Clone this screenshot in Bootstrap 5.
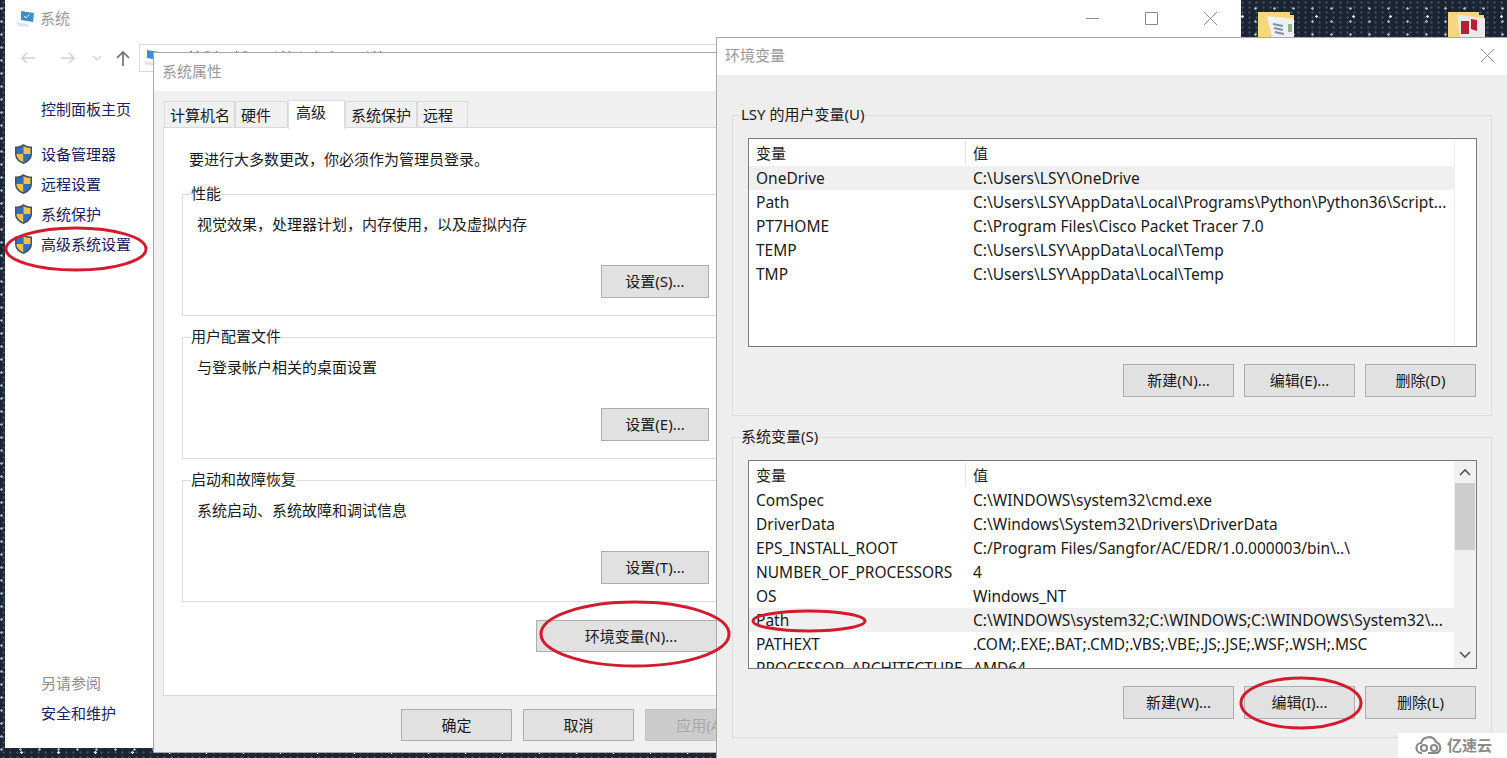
<!DOCTYPE html>
<html lang="zh-CN">
<head>
    <meta charset="UTF-8">
    <meta name="viewport" content="width=device-width, initial-scale=1.0">
    <title>环境变量</title>
    <link href="https://cdn.jsdelivr.net/npm/bootstrap@5.3.0/dist/css/bootstrap.min.css" rel="stylesheet">
    <style>
        body {
            width: 1507px;
            height: 758px;
            overflow: hidden;
            position: relative;
            font-family: "Noto Sans", "Noto Sans CJK SC", sans-serif;
            font-size: 15px;
            color: #1a1a1a;
            background-color: #1b2433;
            background-image:
                radial-gradient(circle, #dfe8f2 0 1px, transparent 1.5px),
                radial-gradient(circle, #9fb0c4 0 1px, transparent 1.5px),
                radial-gradient(circle, #3a4656 0 1px, transparent 1.5px);
            background-size: 37px 23px, 19px 13px, 7px 5px;
            background-position: 3px 5px, 11px 2px, 0 0;
        }
        .desk-win { position: absolute; }
        .panel-win { left: 5px; top: 0; width: 1236px; height: 748px; background: #fff; }
        .props-win { left: 153px; top: 52px; width: 620px; height: 701px; background: #f0f0f0; border: 1px solid #a8a8a8; }
        .env-win { left: 716px; top: 37px; width: 791px; height: 721px; background: #eee; border-top: 1px solid #a8a8a8; border-left: 1px solid #a8a8a8; }
        .panel-title { height: 37px; padding-left: 10px; color: #999; }
        .panel-title span { margin-left: 5px; }
        .win-ctrls { gap: 46px; padding-right: 24px; }
        .panel-nav { height: 28px; margin-top: 7px; padding-left: 15px; }
        .nav-up { margin-left: 13px; }
        .addr-box { margin-left: 8px; height: 28px; width: 1080px; border: 1px solid #d9d9d9; padding-left: 3px; gap: 27px; color: #333; }
        .side-col { width: 147px; flex: 1; padding-bottom: 20px; }
        .side-link { height: 30px; line-height: 30px; padding-left: 36px; color: #1b2060; white-space: nowrap; position: relative; }
        .side-link svg { position: absolute; left: 9px; top: 4px; }
        .side-home { margin-top: 22px; margin-bottom: 15px; }
        .side-muted { color: #8c8c8c; }
        .dlg-title { background: #fff; color: #999; white-space: nowrap; }
        .props-win .dlg-title { height: 38px; line-height: 36px; padding-left: 8px; }
        .env-win .dlg-title { height: 37px; padding-bottom: 2px; padding-left: 8px; padding-right: 13px; }
        .prop-tabs { padding: 10px 0 0 10px; height: 36px; border: 0; flex-wrap: nowrap; }
        .prop-tabs .nav-link {
            height: 26px;
            padding: 0 0 0 5px;
            margin: 0;
            line-height: 27px;
            text-align: left;
            color: #1a1a1a;
            background: #f0f0f0;
            border: 1px solid #d9d9d9;
            border-bottom: 0;
            border-radius: 0;
        }
        .prop-tabs .nav-link.active {
            height: 29px;
            margin-top: -1px;
            padding-left: 7px;
            line-height: 22px;
            background: #fff;
            color: #1a1a1a;
            position: relative;
            z-index: 1;
        }
        .tab-w1 { width: 71px; }
        .tab-w2 { width: 53px; }
        .tab-w3 { width: 57px; }
        .tab-w4 { width: 72px; }
        .tab-w5 { width: 51px; }
        .tab-page { margin: 0 9px 0 9px; height: 569px; background: #fff; border: 1px solid #d9d9d9; padding-top: 19px; }
        .tab-note { height: 24px; line-height: 24px; padding-left: 25px; margin-bottom: 13px; }
        .frame { border: 1px solid #dcdcdc; margin: 0; min-width: 0; }
        .frame legend {
            float: none;
            width: auto;
            font-size: 15px;
            line-height: 19px;
            margin: 0 0 0 -6px;
            padding: 0 0 1px 0;
        }
        .tab-frame { margin: 0 34px 11px 18px; padding: 8px 18px 17px 14px; }
        .tab-frame p { height: 24px; line-height: 24px; margin: 0 0 29px 0; }
        .btn-win {
            height: 33px;
            padding: 0;
            font-size: 15px;
            color: #1a1a1a;
            background: #e1e1e1;
            border: 1px solid #adadad;
            border-radius: 0;
        }
        .btn-win:disabled { color: #a8a8a8; background: #ccc; border-color: #bfbfbf; opacity: 1; }
        .btn-set { width: 108px; }
        .btn-env { width: 190px; height: 32px; margin: 7px 0 0 372px; }
        .props-foot { padding: 13px 0 0 247px; gap: 11px; }
        .props-foot .btn-win { width: 111px; height: 32px; flex: none; }
        .env-body { padding: 30px 15px 0 15px; }
        .env-frame { padding: 13px 15px 0 15px; margin-bottom: 11px; height: 311px; }
        .env-frame legend { margin-left: -7px; }
        .var-list { height: 209px; width: 729px; background: #fff; border: 1px solid #7a7a7a; overflow: hidden; }
        .var-rows { width: 705px; }
        .var-side { width: 22px; border-left: 1px solid #eee; }
        .var-row { height: 24px; line-height: 24px; white-space: nowrap; font-size: 15.5px; }
        .var-head { height: 27px; line-height: 28px; font-size: 15px; }
        .var-head .var-name { border-right: 1px solid #e5e5e5; height: 24px; line-height: 25px; margin-top: 2px; }
        .var-name { width: 217px; flex: none; padding-left: 7px; overflow: hidden; }
        .var-val { overflow: hidden; padding-left: 7px; }
        .var-sel { background: #f0f0f0; }
        .scroll-rail { width: 22px; height: 100%; background: #f0f0f0; }
        .scroll-arrow { height: 22px; }
        .scroll-gap { margin-top: 94px; }
        .scroll-thumb { height: 67px; margin: 0 1px; background: #cdcdcd; }
        .env-btns { margin-top: 17px; gap: 10px; }
        .env-btns .btn-win { width: 111px; height: 33px; flex: none; }
        .scribbles { position: absolute; left: 0; top: 0; pointer-events: none; }
        .wm-box { position: absolute; right: 0; bottom: 0; width: 109px; height: 25px; background: #fff; padding-left: 16px; gap: 3px; color: #8a8a8a; font-size: 15px; font-weight: 700; }
    </style>
</head>
<body>
    <!-- desktop icons -->
    <svg class="desk-win" style="left:1258px;top:12px" width="38" height="25" viewBox="0 0 38 25">
        <path d="M0 0h32v3h4v22H0z" fill="#f6d77f"/>
        <path d="M9 4l27 3v18H14z" fill="#eef0f2"/>
        <path d="M15 12l10 2M16 16l9 2M17 20l9 2" stroke="#7f8fa8" stroke-width="2"/>
        <path d="M30 12h4v8h-4z" fill="#8cb59a"/>
    </svg>
    <svg class="desk-win" style="left:1448px;top:12px" width="38" height="25" viewBox="0 0 38 25">
        <path d="M0 0h31v3h5v22H0z" fill="#f6d77f"/>
        <path d="M9 3l28 3v19H12z" fill="#e9e9ec"/>
        <path d="M13 9h8v13h-8zM23 7l6 1v11l-6-2z" fill="#b81f33"/>
    </svg>

    <!-- control panel window -->
    <div class="desk-win panel-win d-flex flex-column">
        <div class="panel-title d-flex align-items-center justify-content-between">
            <div class="d-flex align-items-center">
                <svg width="20" height="18" viewBox="0 0 20 18"><path d="M6 1l13 2-1 9-12-2z" fill="#3d8ed0"/><path d="M9 6l2 2 4-4" stroke="#fff" fill="none"/><path d="M1 12l11 2 3 3-12-1z" fill="#dfe3e6"/></svg>
                <span>系统</span>
            </div>
            <div class="d-flex align-items-center win-ctrls">
                <svg width="13" height="13" viewBox="0 0 13 13"><path d="M0 6.500h13" stroke="#8a8a8a"/></svg>
                <svg width="13" height="13" viewBox="0 0 13 13"><path d="M.5.5h12v12H.5z" stroke="#8a8a8a" fill="none"/></svg>
                <svg width="13" height="13" viewBox="0 0 13 13"><path d="M0 0l13 13M13 0L0 13" stroke="#8a8a8a"/></svg>
            </div>
        </div>
        <div class="panel-nav d-flex align-items-center">
            <svg width="16" height="14" viewBox="0 0 16 14"><path d="M15 7H2M7 2L2 7l5 5" stroke="#d0d0d0" stroke-width="1.5" fill="none"/></svg>
            <svg class="ms-4" width="16" height="14" viewBox="0 0 16 14"><path d="M1 7h13M9 2l5 5-5 5" stroke="#d0d0d0" stroke-width="1.5" fill="none"/></svg>
            <svg class="ms-3" width="10" height="8" viewBox="0 0 10 8"><path d="M1 2l4 4 4-4" stroke="#d0d0d0" stroke-width="1.2" fill="none"/></svg>
            <svg class="nav-up" width="16" height="16" viewBox="0 0 16 16"><path d="M8 16V2M2 8l6-6 6 6" stroke="#707070" stroke-width="1.7" fill="none"/></svg>
            <div class="addr-box d-flex align-items-center">
                <svg width="18" height="18" viewBox="0 0 18 18"><path d="M4 1l12 2-1 8-11-2z" fill="#3d8ed0"/><path d="M1 12l10 2 3 3-11-1z" fill="#dfe3e6"/></svg>
                <span>控制面板 &gt; 系统和安全 &gt; 系统</span>
            </div>
        </div>
        <div class="side-col d-flex flex-column">
            <div class="side-link side-home">控制面板主页</div>
            <div class="side-link"><svg width="19" height="22" viewBox="0 0 19 22"><use href="#uac"/></svg>设备管理器</div>
            <div class="side-link"><svg width="19" height="22" viewBox="0 0 19 22"><use href="#uac"/></svg>远程设置</div>
            <div class="side-link"><svg width="19" height="22" viewBox="0 0 19 22"><use href="#uac"/></svg>系统保护</div>
            <div class="side-link"><svg width="19" height="22" viewBox="0 0 19 22"><use href="#uac"/></svg>高级系统设置</div>
            <div class="side-link side-muted mt-auto">另请参阅</div>
            <div class="side-link">安全和维护</div>
        </div>
    </div>

    <!-- system properties dialog -->
    <div class="desk-win props-win">
        <div class="dlg-title">系统属性</div>
        <ul class="nav nav-tabs prop-tabs">
            <li class="nav-item"><a class="nav-link tab-w1" href="#">计算机名</a></li>
            <li class="nav-item"><a class="nav-link tab-w2" href="#">硬件</a></li>
            <li class="nav-item"><a class="nav-link active tab-w3" href="#">高级</a></li>
            <li class="nav-item"><a class="nav-link tab-w4" href="#">系统保护</a></li>
            <li class="nav-item"><a class="nav-link tab-w5" href="#">远程</a></li>
        </ul>
        <div class="tab-page">
            <div class="tab-note">要进行大多数更改，你必须作为管理员登录。</div>
            <fieldset class="frame tab-frame">
                <legend>性能</legend>
                <p>视觉效果，处理器计划，内存使用，以及虚拟内存</p>
                <div class="d-flex justify-content-end"><button class="btn btn-win btn-set">设置(S)...</button></div>
            </fieldset>
            <fieldset class="frame tab-frame">
                <legend>用户配置文件</legend>
                <p>与登录帐户相关的桌面设置</p>
                <div class="d-flex justify-content-end"><button class="btn btn-win btn-set">设置(E)...</button></div>
            </fieldset>
            <fieldset class="frame tab-frame">
                <legend>启动和故障恢复</legend>
                <p>系统启动、系统故障和调试信息</p>
                <div class="d-flex justify-content-end"><button class="btn btn-win btn-set">设置(T)...</button></div>
            </fieldset>
            <button class="btn btn-win btn-env">环境变量(N)...</button>
        </div>
        <div class="props-foot d-flex">
            <button class="btn btn-win">确定</button>
            <button class="btn btn-win">取消</button>
            <button class="btn btn-win" disabled>应用(A)</button>
        </div>
    </div>

    <!-- environment variables dialog -->
    <div class="desk-win env-win">
        <div class="dlg-title d-flex align-items-center justify-content-between">
            <span>环境变量</span>
            <svg width="13" height="13" viewBox="0 0 13 13"><path d="M0 0l13 13M13 0L0 13" stroke="#8a8a8a"/></svg>
        </div>
        <div class="env-body">
            <fieldset class="frame env-frame">
                <legend>LSY 的用户变量(U)</legend>
                <div class="var-list d-flex">
                    <div class="var-rows">
                        <div class="var-row var-head d-flex"><div class="var-name">变量</div><div class="var-val">值</div></div>
                        <div class="var-row var-sel d-flex"><div class="var-name">OneDrive</div><div class="var-val">C:\Users\LSY\OneDrive</div></div>
                        <div class="var-row d-flex"><div class="var-name">Path</div><div class="var-val">C:\Users\LSY\AppData\Local\Programs\Python\Python36\Script...</div></div>
                        <div class="var-row d-flex"><div class="var-name">PT7HOME</div><div class="var-val">C:\Program Files\Cisco Packet Tracer 7.0</div></div>
                        <div class="var-row d-flex"><div class="var-name">TEMP</div><div class="var-val">C:\Users\LSY\AppData\Local\Temp</div></div>
                        <div class="var-row d-flex"><div class="var-name">TMP</div><div class="var-val">C:\Users\LSY\AppData\Local\Temp</div></div>
                    </div>
                    <div class="var-side"></div>
                </div>
                <div class="env-btns d-flex justify-content-end">
                    <button class="btn btn-win">新建(N)...</button>
                    <button class="btn btn-win">编辑(E)...</button>
                    <button class="btn btn-win">删除(D)</button>
                </div>
            </fieldset>
            <fieldset class="frame env-frame">
                <legend>系统变量(S)</legend>
                <div class="var-list d-flex">
                    <div class="var-rows">
                        <div class="var-row var-head d-flex"><div class="var-name">变量</div><div class="var-val">值</div></div>
                        <div class="var-row d-flex"><div class="var-name">ComSpec</div><div class="var-val">C:\WINDOWS\system32\cmd.exe</div></div>
                        <div class="var-row d-flex"><div class="var-name">DriverData</div><div class="var-val">C:\Windows\System32\Drivers\DriverData</div></div>
                        <div class="var-row d-flex"><div class="var-name">EPS_INSTALL_ROOT</div><div class="var-val">C:/Program Files/Sangfor/AC/EDR/1.0.000003/bin\..\</div></div>
                        <div class="var-row d-flex"><div class="var-name">NUMBER_OF_PROCESSORS</div><div class="var-val">4</div></div>
                        <div class="var-row d-flex"><div class="var-name">OS</div><div class="var-val">Windows_NT</div></div>
                        <div class="var-row var-sel d-flex"><div class="var-name">Path</div><div class="var-val">C:\WINDOWS\system32;C:\WINDOWS;C:\WINDOWS\System32\...</div></div>
                        <div class="var-row d-flex"><div class="var-name">PATHEXT</div><div class="var-val">.COM;.EXE;.BAT;.CMD;.VBS;.VBE;.JS;.JSE;.WSF;.WSH;.MSC</div></div>
                        <div class="var-row d-flex"><div class="var-name">PROCESSOR_ARCHITECTURE</div><div class="var-val">AMD64</div></div>
                    </div>
                    <div class="scroll-rail">
                        <div class="scroll-arrow d-flex align-items-center justify-content-center"><svg width="12" height="8" viewBox="0 0 12 8"><path d="M1 7l5-5 5 5" stroke="#555" stroke-width="1.6" fill="none"/></svg></div>
                        <div class="scroll-thumb"></div>
                        <div class="scroll-arrow scroll-gap d-flex align-items-center justify-content-center"><svg width="12" height="8" viewBox="0 0 12 8"><path d="M1 1l5 5 5-5" stroke="#555" stroke-width="1.6" fill="none"/></svg></div>
                    </div>
                </div>
                <div class="env-btns d-flex justify-content-end">
                    <button class="btn btn-win">新建(W)...</button>
                    <button class="btn btn-win">编辑(I)...</button>
                    <button class="btn btn-win">删除(L)</button>
                </div>
            </fieldset>
        </div>
    </div>

    <!-- red annotation ellipses drawn over the screenshot -->
    <svg class="scribbles" width="1507" height="758" viewBox="0 0 1507 758" fill="none" stroke="#d01c2e" stroke-width="3">
        <ellipse cx="76" cy="249" rx="70" ry="21"/>
        <ellipse cx="635" cy="634" rx="94" ry="32"/>
        <ellipse cx="809" cy="621" rx="56" ry="10"/>
        <ellipse cx="1301" cy="703" rx="60" ry="25"/>
    </svg>

    <!-- watermark -->
    <div class="wm-box d-flex align-items-center">
        <svg width="30" height="20" viewBox="0 0 30 20" fill="none" stroke="#8a8a8a" stroke-width="2.2"><path d="M8 17a5 5 0 0 1-1-10 8 8 0 0 1 15-1 6 6 0 0 1 1 11H14"/><circle cx="10" cy="12" r="3"/><circle cx="20" cy="12" r="3"/></svg>
        <span>亿速云</span>
    </div>

    <svg width="0" height="0" class="position-absolute">
        <defs>
            <g id="uac">
                <path d="M9.5 1C7 3 4 3.500 1 3.500V11c0 5 4 8.500 8.500 10 4.500-1.500 8.500-5 8.500-10V3.500C15 3.500 12 3 9.500 1z" fill="#47525e"/>
                <path d="M9.500 3C7.500 4.500 5 5 2.500 5v6h7z" fill="#2f6fc4"/>
                <path d="M9.500 3c2 1.500 4.500 2 7 2v6h-7z" fill="#f2c14a"/>
                <path d="M2.500 11h7v8.300c-3.500-1.300-7-4.300-7-8.300z" fill="#f2c14a"/>
                <path d="M16.500 11h-7v8.300c3.500-1.300 7-4.300 7-8.300z" fill="#2f6fc4"/>
            </g>
        </defs>
    </svg>

    <script src="https://cdn.jsdelivr.net/npm/bootstrap@5.3.0/dist/js/bootstrap.bundle.min.js"></script>
</body>
</html>
